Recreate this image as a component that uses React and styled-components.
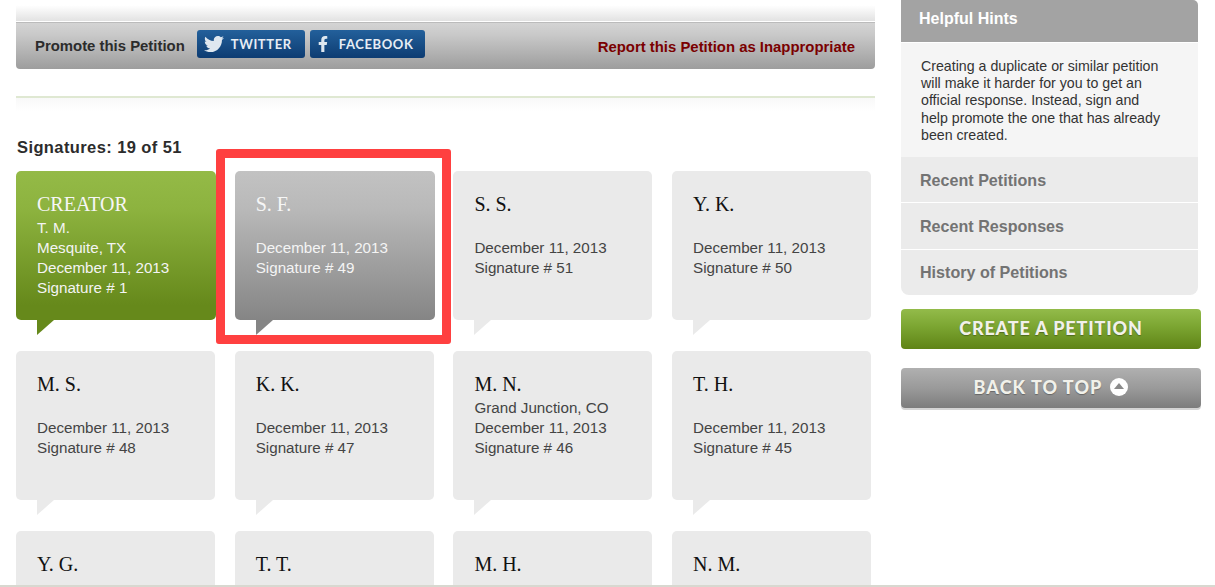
import styled, { createGlobalStyle } from 'styled-components';
import { FaTwitter, FaFacebookF } from 'react-icons/fa';

const GlobalStyle = createGlobalStyle`
	html, body {
		margin: 0;
		padding: 0;
		height: 587px;
		overflow: hidden;
		background: #fff;
		font-family: 'Liberation Sans', Arial, sans-serif;
	}
`;

const Page = styled.div`
	display: flex;
	height: 585px;
	overflow: hidden;
	padding-left: 16px;
`;
const FooterLine = styled.div`
	height: 2px;
	background: #d8d8d0;
`;
const Main = styled.main`
	width: 859px;
	flex: none;
`;
const TopFade = styled.div`
	height: 21px;
	background: linear-gradient(#fff 25%, #e2e2e2);
	border-bottom: 1px solid #fff;
`;
const PromoBar = styled.div`
	display: flex;
	align-items: flex-start;
	height: 47px;
	box-sizing: border-box;
	border-radius: 0 0 4px 4px;
	background: linear-gradient(#d4d4d4, #c9c9c9 25%, #9d9d9d);
	border-top: 1px solid #bbb;
	padding: 7px 20px 0 19px;
`;
const PromoLabel = styled.span`
	font-size: 14.9px;
	font-weight: bold;
	color: #2c2c2c;
	line-height: 32px;
	margin-right: 12px;
`;
const ShareButton = styled.a`
	display: flex;
	align-items: center;
	box-sizing: border-box;
	width: ${p => p.$width}px;
	height: 28px;
	margin-right: 5px;
	padding-left: ${p => p.$pad}px;
	border-radius: 3px;
	background: linear-gradient(#23609b, #0d3c72);
	color: #e6edf4;
	font-family: Lato, sans-serif;
	font-size: 13px;
	font-weight: 700;
	letter-spacing: 0.6px;
	svg {
		margin-right: ${p => p.$gap}px;
		color: #dfe8f0;
	}
`;
const ReportLink = styled.a`
	margin-left: auto;
	font-size: 14.9px;
	font-weight: bold;
	color: #7a0000;
	line-height: 34px;
`;
const Divider = styled.div`
	height: 14px;
	margin-top: 27px;
	border-top: 2px solid #dfe8d2;
	background: linear-gradient(#f8f8f8, #fff);
`;
const SectionTitle = styled.h2`
	margin: 24px 0 13px 1px;
	font-size: 16.5px;
	line-height: 22px;
	font-weight: bold;
	letter-spacing: 0.4px;
	color: #2c2c2c;
`;
const CardGrid = styled.div`
	display: grid;
	grid-template-columns: repeat(4, 199px);
	column-gap: 19.7px;
	row-gap: 31px;
	position: relative;
`;
const Highlight = styled.div`
	position: absolute;
	left: 200px;
	top: -22px;
	width: 235px;
	height: 195px;
	box-sizing: border-box;
	border: 9px solid #ff4040;
	border-radius: 3px;
	pointer-events: none;
`;
const cardBackground = {
	plain: '#eaeaea',
	green: 'linear-gradient(#94ba47, #8db33f 25%, #66891b 90%)',
	gray: 'linear-gradient(#c2c2c2, #b9b9b9 25%, #858585)',
};
const tailColor = { plain: '#eaeaea', green: '#66891b', gray: '#858585' };
const Card = styled.article`
	position: relative;
	height: 149px;
	box-sizing: border-box;
	padding: 22px 21px 0;
	margin-right: ${p => (p.$tone === 'plain' ? 0 : -1)}px;
	border-radius: 5px;
	background: ${p => cardBackground[p.$tone]};
	color: ${p => (p.$tone === 'plain' ? '#444' : '#f4f4f4')};
	font-size: 15.2px;
	line-height: 20px;
	&::after {
		content: '';
		position: absolute;
		left: 21px;
		top: 100%;
		border-style: solid;
		border-width: 15px 17px 0 0;
		border-color: ${p => tailColor[p.$tone]} transparent transparent transparent;
	}
`;
const CardName = styled.div`
	font-family: 'Liberation Serif', 'Times New Roman', serif;
	font-size: 20px;
	line-height: 22px;
	color: ${p => (p.$tone === 'plain' ? '#111' : '#f6f6f6')};
	margin-bottom: 3px;
`;
const CardLine = styled.div`
	min-height: 20px;
`;
const Sidebar = styled.aside`
	width: 297px;
	flex: none;
	margin-left: 26px;
`;
const HintsTitle = styled.h3`
	margin: 0;
	height: 42px;
	box-sizing: border-box;
	padding: 9px 18px 0;
	border-radius: 0 5px 0 0;
	background: #a3a3a3;
	color: #fff;
	font-size: 16px;
	line-height: 20px;
	font-weight: bold;
`;
const HintsBody = styled.p`
	margin: 1px 0 0;
	height: 114px;
	box-sizing: border-box;
	padding: 15px 20px 0;
	background: #f5f5f5;
	color: #333;
	font-size: 14.2px;
	line-height: 17.2px;
`;
const NavList = styled.nav`
	margin-bottom: 14px;
	border-radius: 0 0 8px 8px;
	overflow: hidden;
`;
const NavItem = styled.a`
	display: block;
	height: ${p => p.$h}px;
	box-sizing: border-box;
	padding: ${p => (p.$last ? 12 : 13)}px 19px 0;
	background: #ebebeb;
	border-bottom: ${p => (p.$last ? 'none' : '1px solid #fff')};
	color: #737373;
	font-size: 16.1px;
	line-height: 20px;
	font-weight: bold;
`;
const ActionButton = styled.a`
	display: flex;
	align-items: center;
	justify-content: center;
	gap: 8px;
	width: 300px;
	height: ${p => p.$h}px;
	box-sizing: border-box;
	padding-bottom: 3px;
	margin-bottom: 19px;
	border-radius: 4px;
	background: ${p => p.$bg};
	color: #f1f1ea;
	font-family: Lato, sans-serif;
	font-size: 18px;
	font-weight: 900;
	letter-spacing: 0.85px;
	text-shadow: 0 1px 1px rgba(0, 0, 0, 0.3);
`;
const BackButton = styled(ActionButton)`
	letter-spacing: 1.05px;
	box-shadow: 0 2px 0 #d4d4d4;
`;
const UpCircle = styled.span`
	position: relative;
	width: 18px;
	height: 18px;
	border-radius: 50%;
	background: #fff;
	&::after {
		content: '';
		position: absolute;
		left: 4px;
		top: 5px;
		border-style: solid;
		border-width: 0 5px 6px;
		border-color: transparent transparent #8a8a8a;
	}
`;

const SIGNATURES = [
	{ tone: 'green', name: 'CREATOR', lines: ['T. M.', 'Mesquite, TX', 'December 11, 2013', 'Signature # 1'] },
	{ tone: 'gray', name: 'S. F.', lines: ['', 'December 11, 2013', 'Signature # 49'] },
	{ name: 'S. S.', lines: ['', 'December 11, 2013', 'Signature # 51'] },
	{ name: 'Y. K.', lines: ['', 'December 11, 2013', 'Signature # 50'] },
	{ name: 'M. S.', lines: ['', 'December 11, 2013', 'Signature # 48'] },
	{ name: 'K. K.', lines: ['', 'December 11, 2013', 'Signature # 47'] },
	{ name: 'M. N.', lines: ['Grand Junction, CO', 'December 11, 2013', 'Signature # 46'] },
	{ name: 'T. H.', lines: ['', 'December 11, 2013', 'Signature # 45'] },
	{ name: 'Y. G.', lines: [] },
	{ name: 'T. T.', lines: [] },
	{ name: 'M. H.', lines: [] },
	{ name: 'N. M.', lines: [] },
];

const App = () => {
	return (
		<>
			<GlobalStyle />
			<Page>
				<Main>
					<TopFade />
					<PromoBar>
						<PromoLabel>Promote this Petition</PromoLabel>
						<ShareButton $width={108} $pad={7} $gap={7}>
							<FaTwitter size={20} /> TWITTER
						</ShareButton>
						<ShareButton $width={115} $pad={5} $gap={8}>
							<FaFacebookF size={16} /> FACEBOOK
						</ShareButton>
						<ReportLink>Report this Petition as Inappropriate</ReportLink>
					</PromoBar>
					<Divider />
					<SectionTitle>Signatures: 19 of 51</SectionTitle>
					<CardGrid>
						{SIGNATURES.map(sig => (
							<Card key={sig.name} $tone={sig.tone || 'plain'}>
								<CardName $tone={sig.tone || 'plain'}>{sig.name}</CardName>
								{sig.lines.map((line, i) => (
									<CardLine key={i}>{line}</CardLine>
								))}
							</Card>
						))}
						<Highlight />
					</CardGrid>
				</Main>
				<Sidebar>
					<HintsTitle>Helpful Hints</HintsTitle>
					<HintsBody>
						Creating a duplicate or similar petition will make it harder for you
						to get an official response. Instead, sign and
						<br />
						help promote the one that has already been created.
					</HintsBody>
					<NavList>
						<NavItem $h={46}>Recent Petitions</NavItem>
						<NavItem $h={47}>Recent Responses</NavItem>
						<NavItem $h={45} $last>History of Petitions</NavItem>
					</NavList>
					<ActionButton $h={40} $bg='linear-gradient(#93bb4a, #7ba531 45%, #5f8416)'>
						CREATE A PETITION
					</ActionButton>
					<BackButton $h={40} $bg='linear-gradient(#b0b0b0, #9a9a9a 50%, #7c7c7c)'>
						BACK TO TOP <UpCircle />
					</BackButton>
				</Sidebar>
			</Page>
			<FooterLine />
		</>
	);
};

export default App;
